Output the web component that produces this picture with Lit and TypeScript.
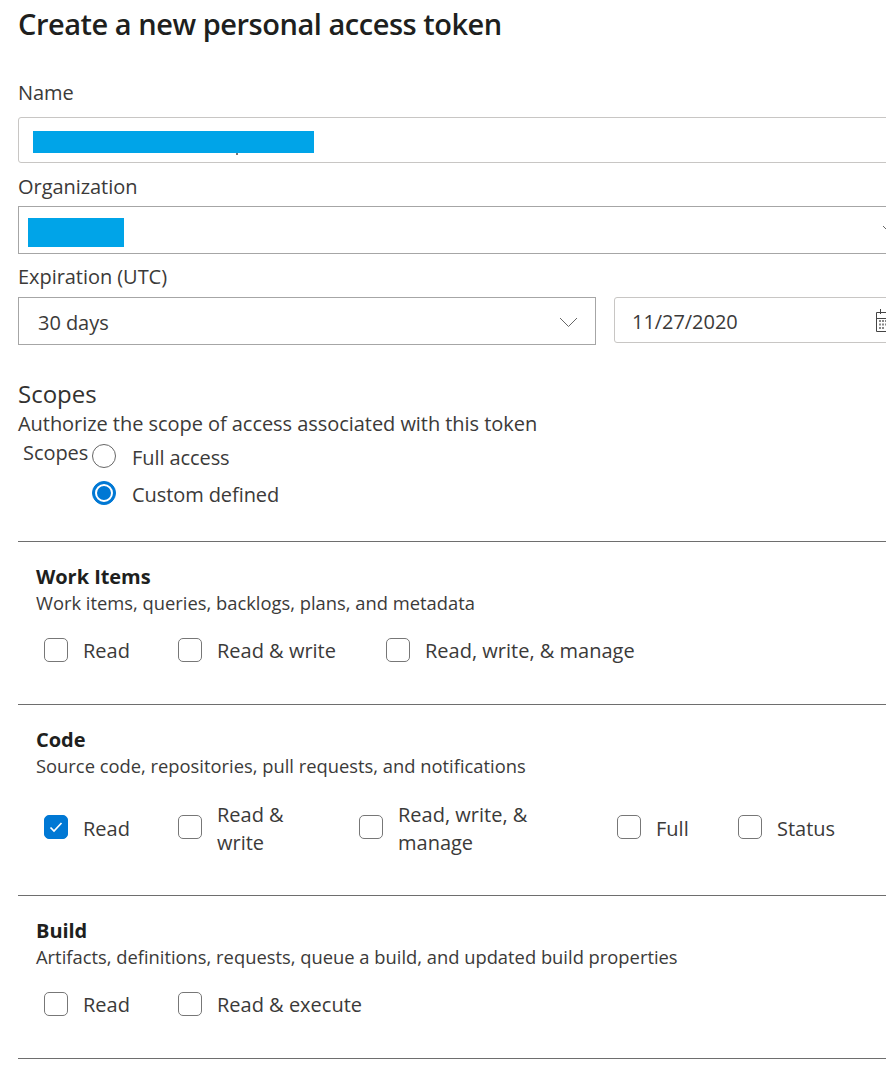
import { LitElement, html, css, svg } from "lit";
import { customElement } from "lit/decorators.js";

interface Option {
  label: string;
  checked?: boolean;
  width?: number;
  textWidth?: number;
}

interface Section {
  title: string;
  desc: string;
  options: Option[];
  tall?: boolean;
}

const SECTIONS: Section[] = [
  {
    title: "Work Items",
    desc: "Work items, queries, backlogs, plans, and metadata",
    options: [
      { label: "Read", width: 134 },
      { label: "Read & write", width: 208 },
      { label: "Read, write, & manage" },
    ],
  },
  {
    title: "Code",
    desc: "Source code, repositories, pull requests, and notifications",
    tall: true,
    options: [
      { label: "Read", checked: true, width: 134 },
      { label: "Read & write", width: 181, textWidth: 90 },
      { label: "Read, write, & manage", width: 258, textWidth: 140 },
      { label: "Full", width: 121 },
      { label: "Status" },
    ],
  },
  {
    title: "Build",
    desc: "Artifacts, definitions, requests, queue a build, and updated build properties",
    options: [
      { label: "Read", width: 134 },
      { label: "Read & execute" },
    ],
  },
];

const chevron = svg`<path d="M1 1l8.5 8.5L18 1" fill="none" stroke="#666" stroke-width="1"/>`;

@customElement("app-root")
export class AppRoot extends LitElement {
  private renderOption(o: Option) {
    return html`
      <label class="option" style=${o.width ? `width:${o.width}px` : ""}>
        <span class="box ${o.checked ? "checked" : ""}">
          ${o.checked
            ? html`<svg width="14" height="12" viewBox="0 0 14 12">
                <path d="M1.5 6.500l3.500 3.500 7.500-8" fill="none" stroke="#fff" stroke-width="1.700" />
              </svg>`
            : ""}
        </span>
        <span class="option-text" style=${o.textWidth ? `width:${o.textWidth}px` : ""}>${o.label}</span>
      </label>
    `;
  }

  private renderSection(s: Section) {
    return html`
      <section class="scope ${s.tall ? "tall" : ""}">
        <div class="scope-title">${s.title}</div>
        <div class="scope-desc">${s.desc}</div>
        <div class="options">${s.options.map((o) => this.renderOption(o))}</div>
      </section>
    `;
  }

  protected render() {
    return html`
      <main>
        <h1>Create a new personal access token</h1>

        <div class="label name-label">Name</div>
        <div class="input name-input"><span class="mask"></span></div>

        <div class="label org-label">Organization</div>
        <div class="select org-select">
          <span class="mask"></span>
          <svg class="org-chevron" width="19" height="11" viewBox="0 0 19 11">${chevron}</svg>
        </div>

        <div class="label exp-label">Expiration (UTC)</div>
        <div class="exp-row">
          <div class="select days">
            <span>30 days</span>
            <svg width="19" height="11" viewBox="0 0 19 11">${chevron}</svg>
          </div>
          <div class="input date">
            <span>11/27/2020</span>
            <svg class="cal" width="14" height="23" viewBox="0 0 14 23">
              <path d="M.5 3.500h13v19H.5zM.5 9.500h13M4.500 0v5M10.500 0v5" fill="none" stroke="#444" />
              <path
                d="M3 11h2v2H3zM6 11h2v2H6zM9 11h2v2H9zM3 14.500h2v2H3zM6 14.500h2v2H6zM9 14.500h2v2H9zM3 18h2v2H3zM6 18h2v2H6z"
                fill="#888"
              />
            </svg>
          </div>
        </div>

        <h2>Scopes</h2>
        <div class="scopes-desc">Authorize the scope of access associated with this token</div>
        <div class="radio-group">
          <div class="radio-label">Scopes</div>
          <div class="radios">
            <label class="radio-row">
              <span class="radio"></span>
              <span class="radio-text">Full access</span>
            </label>
            <label class="radio-row">
              <span class="radio on"><span></span></span>
              <span class="radio-text">Custom defined</span>
            </label>
          </div>
        </div>

        ${SECTIONS.map((s) => this.renderSection(s))}
        <div class="end-rule"></div>
      </main>
    `;
  }

  static styles = css`
    :host {
      display: block;
      width: 886px;
      height: 1082px;
      overflow: hidden;
      background: #fff;
      font-family: "Open Sans", "Noto Sans", sans-serif;
      color: #323130;
    }

    main {
      padding: 0 0 0 18px;
      width: 920px;
      box-sizing: border-box;
    }

    h1 {
      margin: 0;
      padding-top: 3px;
      height: 45px;
      box-sizing: border-box;
      font-size: 29px;
      line-height: 42px;
      font-weight: 600;
      color: #201f1e;
      letter-spacing: -0.47px;
    }

    .label {
      font-size: 20px;
      line-height: 26px;
      color: #3b3a39;
      letter-spacing: -0.05px;
    }

    .name-label {
      margin-top: 35px;
    }

    .input {
      box-sizing: border-box;
      border: 1px solid #c8c6c4;
      border-radius: 3px;
      display: flex;
      align-items: center;
      background: #fff;
    }

    .select {
      box-sizing: border-box;
      border: 1px solid #a6a6a6;
      display: flex;
      align-items: center;
      background: #fff;
    }

    .mask {
      display: block;
      position: relative;
      background: #00a4e8;
    }

    .name-input {
      margin-top: 11px;
      height: 46px;
      padding: 4px 0 0 14px;
    }

    .name-input .mask {
      width: 281px;
      height: 22px;
    }

    .name-input .mask::after {
      content: "";
      position: absolute;
      left: 203px;
      top: 22px;
      width: 2px;
      height: 2px;
      background: #777;
    }

    .org-label {
      margin-top: 11px;
    }

    .org-select {
      margin-top: 6px;
      height: 48px;
      padding: 4px 0 0 9px;
      justify-content: space-between;
    }

    .org-select .mask {
      width: 96px;
      height: 29px;
    }

    .org-chevron {
      margin: -4px 18px 0 0;
    }

    .exp-label {
      margin-top: 10px;
    }

    .exp-row {
      margin-top: 7px;
      display: flex;
      align-items: flex-start;
      gap: 18px;
      font-size: 20px;
      letter-spacing: -0.05px;
      color: #3b3a39;
    }

    .days {
      width: 578px;
      height: 48px;
      padding: 2px 17px 0 19px;
      justify-content: space-between;
    }

    .date {
      flex: 1;
      height: 46px;
      padding: 0 0 0 17px;
    }

    .date span {
      padding-top: 2px;
    }

    .date .cal {
      margin: 0 29px 0 auto;
    }

    h2 {
      margin: 33px 0 0;
      font-size: 24px;
      line-height: 31px;
      font-weight: 400;
      color: #323130;
    }

    .scopes-desc {
      margin-bottom: 1px;
      font-size: 20px;
      line-height: 30px;
      letter-spacing: -0.05px;
      color: #3b3a39;
    }

    .radio-group {
      display: flex;
      align-items: flex-start;
      padding-left: 5px;
    }

    .radio-label {
      width: 69px;
      font-size: 20px;
      line-height: 26px;
      letter-spacing: -0.05px;
      color: #3b3a39;
    }

    .radios {
      display: flex;
      flex-direction: column;
      gap: 13px;
      padding-top: 4px;
    }

    .radio-row {
      display: flex;
      align-items: center;
      height: 24px;
      gap: 16px;
    }

    .radio {
      box-sizing: border-box;
      width: 24px;
      height: 24px;
      border-radius: 50%;
      border: 1px solid #666;
      display: flex;
      align-items: center;
      justify-content: center;
    }

    .radio.on {
      background: #0078d4;
      border-color: #0078d4;
    }

    .radio.on span {
      box-sizing: border-box;
      width: 18px;
      height: 18px;
      border-radius: 50%;
      background: #0078d4;
      border: 2px solid #fff;
    }

    .radio-text {
      padding-top: 2px;
      font-size: 20px;
      letter-spacing: -0.08px;
      color: #3b3a39;
    }

    .scope {
      box-sizing: border-box;
      height: 163px;
      border-top: 1px solid #6e6e6e;
      padding: 21px 0 0 18px;
    }

    .radio-group + .scope {
      margin-top: 36px;
    }

    .scope.tall {
      height: 191px;
    }

    .scope-title {
      font-size: 20px;
      line-height: 28px;
      font-weight: 700;
      color: #201f1e;
      letter-spacing: -0.05px;
    }

    .scope-desc {
      font-size: 18.35px;
      line-height: 24px;
      color: #3b3a39;
    }

    .options {
      margin-top: 20px;
      padding-left: 8px;
      display: flex;
      align-items: center;
    }

    .scope.tall .options {
      margin-top: 23px;
    }

    .option {
      display: flex;
      align-items: center;
      flex: none;
      gap: 15px;
    }

    .box {
      box-sizing: border-box;
      flex: none;
      width: 24px;
      height: 24px;
      border: 1px solid #777;
      border-radius: 5px;
      display: flex;
      align-items: center;
      justify-content: center;
    }

    .scope.tall .box {
      margin-bottom: 4px;
    }

    .box.checked {
      background: #0078d4;
      border-color: #0078d4;
    }

    .option-text {
      font-size: 20px;
      line-height: 28px;
      color: #3b3a39;
    }

    .scope:not(.tall) .option-text {
      padding-top: 2px;
    }

    .end-rule {
      border-top: 1px solid #6e6e6e;
    }
  `;
}
